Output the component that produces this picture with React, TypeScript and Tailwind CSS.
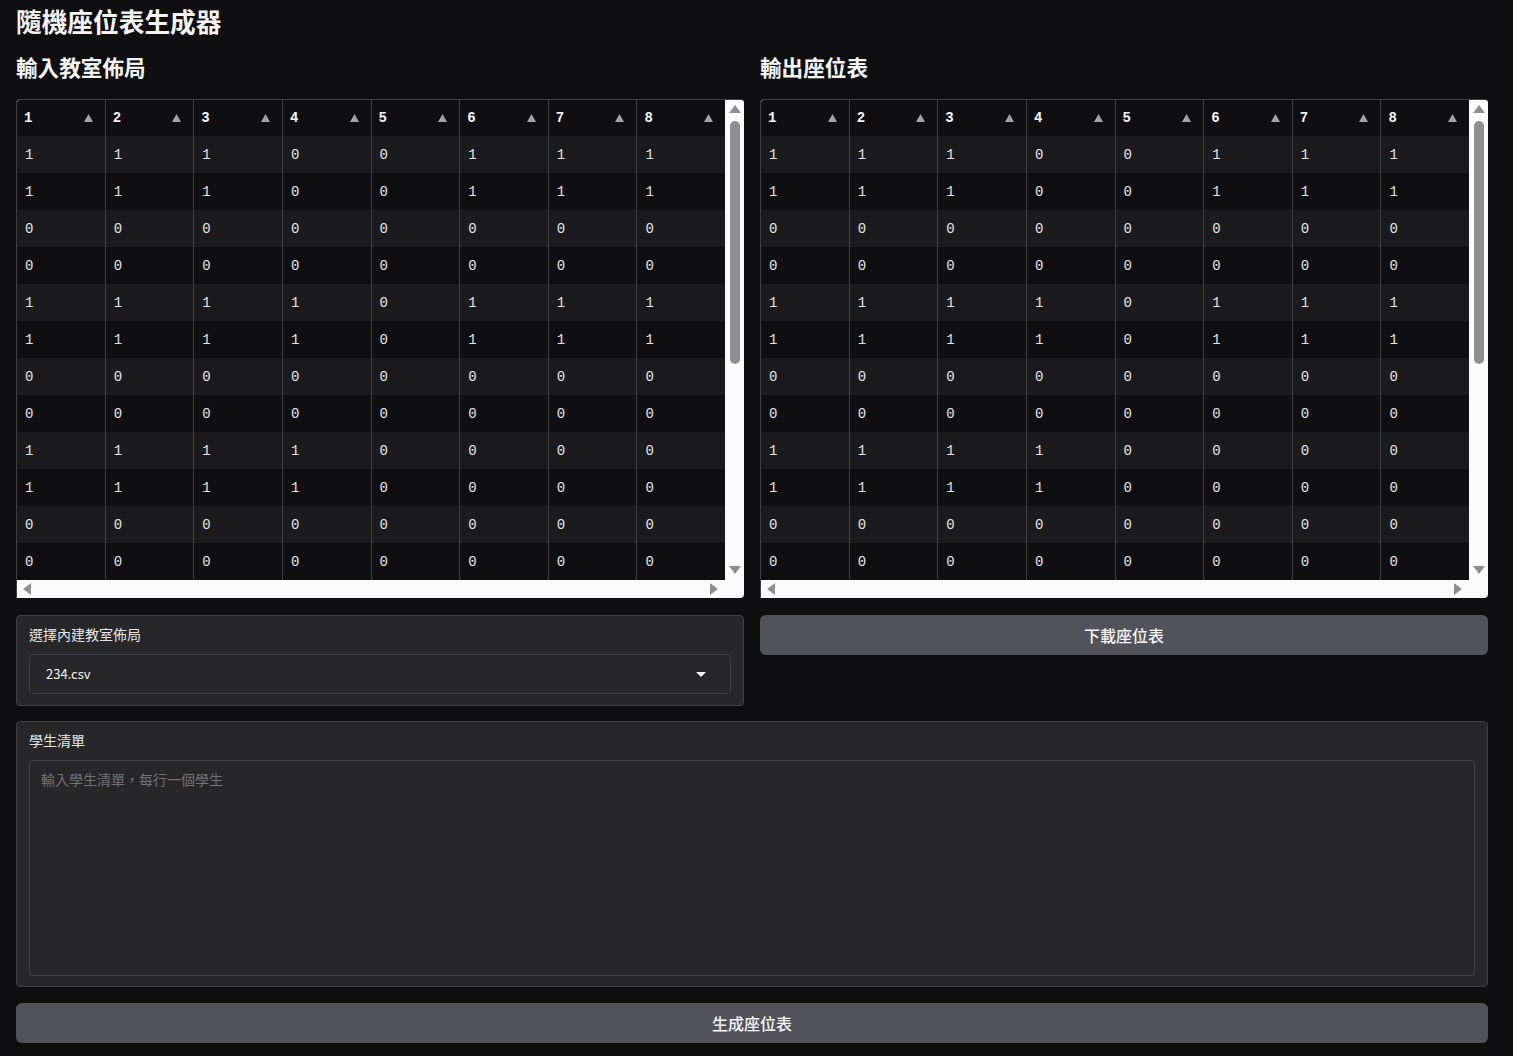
const layout = [
  [1, 1, 1, 0, 0, 1, 1, 1],
  [1, 1, 1, 0, 0, 1, 1, 1],
  [0, 0, 0, 0, 0, 0, 0, 0],
  [0, 0, 0, 0, 0, 0, 0, 0],
  [1, 1, 1, 1, 0, 1, 1, 1],
  [1, 1, 1, 1, 0, 1, 1, 1],
  [0, 0, 0, 0, 0, 0, 0, 0],
  [0, 0, 0, 0, 0, 0, 0, 0],
  [1, 1, 1, 1, 0, 0, 0, 0],
  [1, 1, 1, 1, 0, 0, 0, 0],
  [0, 0, 0, 0, 0, 0, 0, 0],
  [0, 0, 0, 0, 0, 0, 0, 0],
];

const cjk = "font-['Noto_Sans_CJK_TC','Noto_Sans',sans-serif]";
const mono = "font-['Liberation_Mono',monospace]";

const SeatTable = () => {
  return (
    <div className="flex h-[499px] flex-col overflow-hidden rounded-tl-[4px] rounded-r-[4px] border-l border-t border-[#3f3f46] bg-[#fbfbfb]">
      <div className="flex flex-1">
        <div className={`flex flex-1 bg-[#0f0f11] text-[14px] text-[#e4e4e7] ${mono}`}>
          {[0, 1, 2, 3, 4, 5, 6, 7].map((c) => (
            <div key={c} className={`flex flex-1 flex-col ${c < 7 ? "border-r border-[#3f3f46]" : ""}`}>
              <div className="flex h-[36px] items-center justify-between pl-[7px] pr-[12px] font-bold text-[#f4f4f5]">
                <span>{c + 1}</span>
                <svg width="9" height="8" viewBox="0 0 9 8">
                  <path d="M4.5 0L9 8H0z" fill="#a1a1aa" />
                </svg>
              </div>
              {layout.map((row, r) => (
                <div
                  key={r}
                  className={`flex h-[37px] items-center pl-[8px] pt-[2px] ${r % 2 === 0 ? "bg-[#1b1b1d]" : "bg-[#0f0f11]"}`}
                >
                  {row[c]}
                </div>
              ))}
            </div>
          ))}
        </div>
        <div className="flex w-[19px] flex-col items-center bg-[#fbfbfb]">
          <svg className="mt-[5px]" width="12" height="8" viewBox="0 0 12 8">
            <path d="M6 0L12 8H0z" fill="#8f8f8f" />
          </svg>
          <div className="mt-[8px] h-[243px] w-[10px] rounded-full bg-[#8f8f8f]" />
          <div className="flex-1" />
          <svg className="mb-[6px]" width="12" height="8" viewBox="0 0 12 8">
            <path d="M0 0H12L6 8z" fill="#8f8f8f" />
          </svg>
        </div>
      </div>
      <div className="flex h-[18px] items-center justify-between pl-[6px] pr-[26px]">
        <svg width="8" height="12" viewBox="0 0 8 12">
          <path d="M8 0V12L0 6z" fill="#8f8f8f" />
        </svg>
        <svg width="8" height="12" viewBox="0 0 8 12">
          <path d="M0 0L8 6L0 12z" fill="#8f8f8f" />
        </svg>
      </div>
    </div>
  );
};

export default function App() {
  return (
    <div className={`min-h-screen w-[1513px] bg-[#0f0f11] px-4 pb-4 text-[#f4f4f5] ${cjk}`}>
      <div className="w-[1472px]">
        <h1 className="pt-[4px] text-[25.7px] font-bold leading-[34px]">隨機座位表生成器</h1>

        <div className="mt-[15px] grid grid-cols-2 gap-4">
          <div className="flex flex-col">
            <h2 className="text-[21.6px] font-bold leading-[28px]">輸入教室佈局</h2>
            <div className="mt-[18px]">
              <SeatTable />
            </div>
          </div>
          <div className="flex flex-col">
            <h2 className="text-[21.6px] font-bold leading-[28px]">輸出座位表</h2>
            <div className="mt-[18px]">
              <SeatTable />
            </div>
          </div>
        </div>

        <div className="mt-[17px] grid grid-cols-2 items-start gap-4">
          <div className="rounded-[4px] border border-[#3f3f46] bg-[#27272a] px-[12px] pb-[11px] pt-[8px]">
            <div className="text-[14px] leading-[20px] text-[#e4e4e7]">選擇內建教室佈局</div>
            <div className="mt-[10px] flex h-[40px] items-center justify-between rounded-[4px] border border-[#3f3f46] pl-[16px] pr-[24px] text-[13px] text-[#f4f4f5]">
              <span>234.csv</span>
              <svg width="10" height="5" viewBox="0 0 10 5">
                <path d="M0 0H10L5 5z" fill="#f4f4f5" />
              </svg>
            </div>
          </div>
          <button className="flex h-[40px] items-center justify-center rounded-[6px] bg-[#52525b] text-[16px] font-medium text-[#f4f4f5]">
            下載座位表
          </button>
        </div>

        <div className="mt-[15px] rounded-[4px] border border-[#3f3f46] bg-[#27272a] px-[12px] pb-[10px] pt-[8px]">
          <div className="text-[14px] leading-[20px] text-[#e4e4e7]">學生清單</div>
          <textarea
            className="mt-[10px] block h-[216px] w-full resize-none rounded-[4px] border border-[#3f3f46] bg-[#27272a] px-[11px] py-[8px] text-[14px] leading-[20px] text-[#f4f4f5] outline-none placeholder:text-[#71717a]"
            placeholder="輸入學生清單，每行一個學生"
          />
        </div>

        <button className="mt-[16px] flex h-[40px] w-full items-center justify-center rounded-[6px] bg-[#52525b] text-[16px] font-medium text-[#f4f4f5]">
          生成座位表
        </button>
      </div>
    </div>
  );
}
